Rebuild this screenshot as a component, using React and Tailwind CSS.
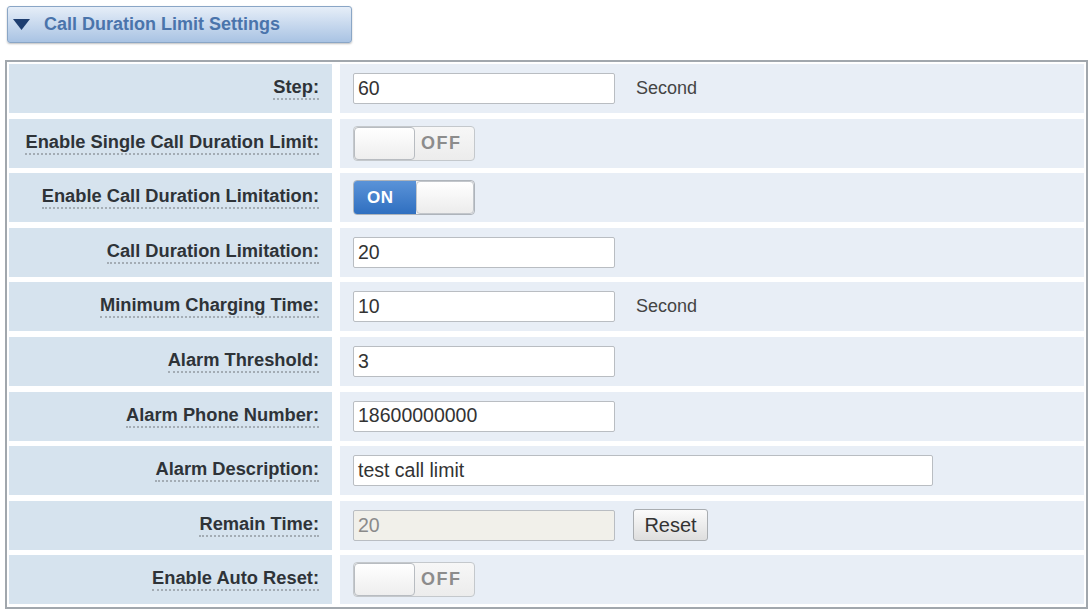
import React from "react";

const font = { fontFamily: '"Liberation Sans", Arial, Helvetica, sans-serif' };

function Toggle({ on }) {
  if (on) {
    return (
      <div className="flex h-[35px] w-[122px] rounded-[4px] border border-[#aeb4bb] bg-[#f3f3f3] overflow-hidden">
        <div className="flex w-[62px] items-center pl-[13px] bg-gradient-to-b from-[#5a93d8] to-[#2f6fc0] text-white font-bold text-[17px] tracking-[0.5px]">ON</div>
        <div className="flex-1 rounded-[4px] border border-[#c2c6cb] bg-gradient-to-b from-[#ffffff] to-[#ececec]" />
      </div>
    );
  }
  return (
    <div className="flex h-[35px] w-[122px] rounded-[4px] border border-[#c4c8cc] bg-gradient-to-b from-[#f7f7f7] to-[#ececec]">
      <div className="w-[61px] rounded-[4px] border border-[#b8bcc1] bg-gradient-to-b from-[#ffffff] to-[#eeeeee]" />
      <div className="flex flex-1 items-center pl-[6px] text-[#8c8c8c] font-bold text-[18px] tracking-[1.5px]">OFF</div>
    </div>
  );
}

function Input({ value, wide, disabled }) {
  return (
    <div
      className={
        "flex h-[31px] items-center rounded-[2px] border border-[#b9bdc2] pl-[4px] text-[19.5px] " +
        (wide ? "w-[580px] " : "w-[262px] ") +
        (disabled ? "bg-[#f1f0ea] text-[#8a8a8a]" : "bg-white text-[#333]")
      }
    >
      {value}
    </div>
  );
}

function Row({ label, children }) {
  return (
    <div className="flex h-[49px] gap-[8px]">
      <div className="flex w-[323px] items-center justify-end bg-[#d6e3ee] pr-[13px]">
        <span className="border-b-2 border-dotted border-[#a3acb4] pb-[1px] leading-[20px] text-[18.3px] font-bold text-[#2e3338]">
          {label}
        </span>
      </div>
      <div className="flex flex-1 items-center bg-[#e8eef6] pl-[13px]">{children}</div>
    </div>
  );
}

function Unit({ children }) {
  return <span className="ml-[21px] text-[18px] text-[#444]">{children}</span>;
}

export default function App() {
  return (
    <div className="h-[612px] w-[1092px] bg-white" style={font}>
      <div className="pt-[6px] pl-[7px]">
        <div className="flex h-[37px] w-[345px] items-center rounded-[3px] border border-[#8aa6c6] bg-gradient-to-b from-[#e6eef8] to-[#a9c3e3] pl-[5px] shadow-[0_1px_2px_rgba(0,0,0,0.25)]">
          <svg width="17" height="11" viewBox="0 0 17 11" className="mr-[14px]">
            <polygon points="0,0 17,0 8.5,11" fill="#1e3e70" />
          </svg>
          <span className="text-[18px] font-bold text-[#4a74ab]">Call Duration Limit Settings</span>
        </div>
      </div>
      <div className="mt-[17px] ml-[5px] w-[1083px] border-2 border-[#a1a7ad] bg-white p-[2px] pb-[3px]">
        <div className="flex flex-col gap-[5.6px]">
          <Row label="Step:">
            <Input value="60" />
            <Unit>Second</Unit>
          </Row>
          <Row label="Enable Single Call Duration Limit:">
            <Toggle on={false} />
          </Row>
          <Row label="Enable Call Duration Limitation:">
            <Toggle on={true} />
          </Row>
          <Row label="Call Duration Limitation:">
            <Input value="20" />
          </Row>
          <Row label="Minimum Charging Time:">
            <Input value="10" />
            <Unit>Second</Unit>
          </Row>
          <Row label="Alarm Threshold:">
            <Input value="3" />
          </Row>
          <Row label="Alarm Phone Number:">
            <Input value="18600000000" />
          </Row>
          <Row label="Alarm Description:">
            <Input value="test call limit" wide />
          </Row>
          <Row label="Remain Time:">
            <Input value="20" disabled />
            <div className="ml-[18px] flex h-[32px] w-[75px] items-center justify-center rounded-[3px] border border-[#a9adb1] bg-gradient-to-b from-[#fbfbfb] to-[#dedede] text-[20px] text-[#333]">
              Reset
            </div>
          </Row>
          <Row label="Enable Auto Reset:">
            <Toggle on={false} />
          </Row>
        </div>
      </div>
    </div>
  );
}
